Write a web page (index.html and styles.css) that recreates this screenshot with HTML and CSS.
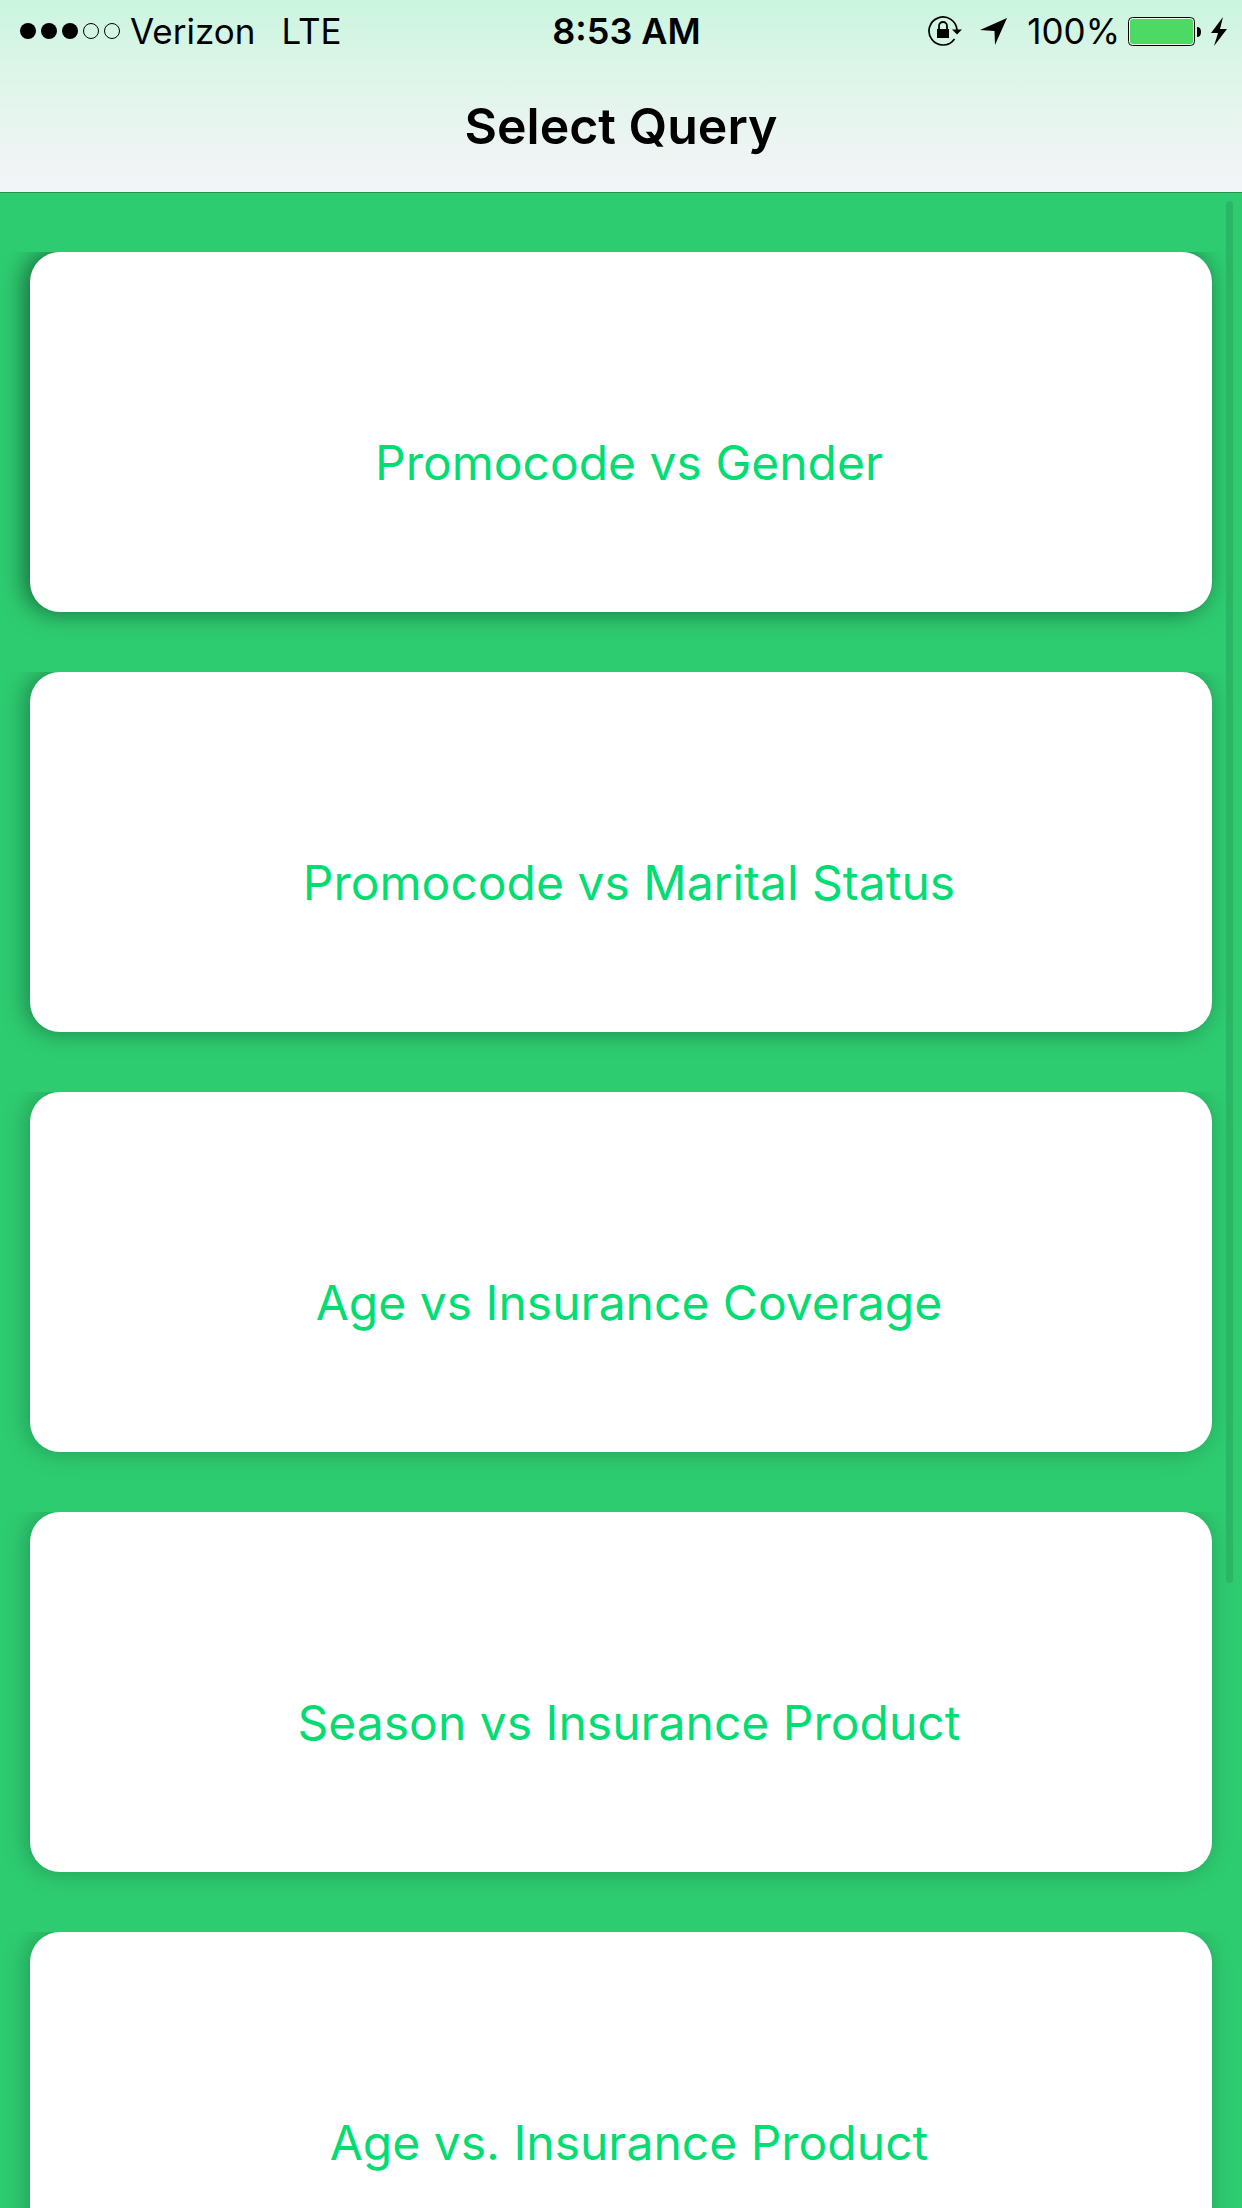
FILE: index.html
```html
<!DOCTYPE html>
<html lang="en">
<head>
<meta charset="utf-8">
<meta name="viewport" content="width=device-width, initial-scale=1">
<title>Select Query</title>
<link rel="stylesheet" href="styles.css">
</head>
<body>
<div class="screen">
  <header class="header">
    <div class="status">
      <div class="status-side">
        <svg class="signal" width="100" height="16" viewBox="0 0 100 16" aria-label="Signal 3 of 5">
          <circle cx="8" cy="8" r="8"/><circle cx="29" cy="8" r="8"/><circle cx="50" cy="8" r="8"/>
          <g fill="none" stroke="#000"><circle cx="71" cy="8" r="7.5"/><circle cx="92" cy="8" r="7.5"/></g>
        </svg>
        <span class="carrier">Verizon</span>
        <span class="network">LTE</span>
      </div>
      <time class="clock">8:53 AM</time>
      <div class="status-side status-right">
        <svg class="lock" width="34" height="32" viewBox="0 0 34 32" aria-label="Rotation lock">
          <path d="M26.500 24A14 14 0 1 1 29 15.500" fill="none" stroke="#000" stroke-width="1.700"/>
          <path d="M24 14.500h10l-5 5z"/>
          <path d="M9 14h12v9H9z"/>
          <path d="M11 14v-3a4 4 0 0 1 8 0v3" fill="none" stroke="#000" stroke-width="1.800"/>
        </svg>
        <svg class="location" width="27" height="27" viewBox="0 0 27 27" aria-label="Location">
          <path d="M27 0 15 27 14.500 13 0 12z"/>
        </svg>
        <span class="percent">100%</span>
        <svg class="battery" width="73" height="29" viewBox="0 0 73 29" aria-label="Battery full">
          <rect x=".5" y=".5" width="66" height="28" rx="4" fill="#fff" fill-opacity=".5" stroke="#000"/>
          <rect x="2" y="2" width="63" height="25" rx="3" fill="#4cd964"/>
          <path d="M69 10q4 0 4 5t-4 5z"/>
        </svg>
        <svg class="bolt" width="16" height="29" viewBox="0 0 16 29" aria-label="Charging">
          <path d="M12 0 0 16h7L3 29l13-17H9z"/>
        </svg>
      </div>
    </div>
    <h1 class="title">Select Query</h1>
  </header>
  <main class="list">
    <button class="card card-deep" type="button">Promocode vs Gender</button>
    <button class="card card-mid" type="button">Promocode vs Marital Status</button>
    <button class="card" type="button">Age vs Insurance Coverage</button>
    <button class="card" type="button">Season vs Insurance Product</button>
    <button class="card" type="button">Age vs. Insurance Product</button>
    <div class="scrollbar"></div>
  </main>
</div>
</body>
</html>
```
FILE: styles.css
```css
* { box-sizing: border-box; }
body { margin: 0; background: #2ecc71; font-family: Inter, "Liberation Sans", sans-serif; color: #000; }
.screen { height: 100vh; display: flex; flex-direction: column; overflow: hidden; }
.header { flex: none; background: linear-gradient(#cbf5df, #dff5e9 40%, #f1f4f5 88%, #f1f5f7); border-bottom: 1px solid #24914f; }
.status { display: grid; grid-template-columns: 1fr auto 1fr; align-items: center; height: 62px; padding: 0 15px 0 20px; font-size: 35px; line-height: 44px; }
.status-side { display: flex; align-items: center; }
.status-right { justify-content: flex-end; }
.carrier { margin-left: 10px; }
.network { margin-left: 26px; }
.clock { padding-left: 6px; font-size: 36px; font-weight: 600; }
.location { margin-left: 18px; }
.percent { margin-left: 20px; }
.battery { margin-left: 8px; }
.bolt { margin-left: 10px; }
.title { margin: 0; padding: 33px 0 35px; font-size: 50px; line-height: 62px; font-weight: 600; text-align: center; }
.list { position: relative; flex: 1; min-height: 0; display: flex; flex-direction: column; gap: 60px; padding: 59px 30px 0; overflow: hidden; }
.card { flex: none; height: 360px; padding: 62px 0 0 16px; border: 0; border-radius: 30px; background: #fff; color: #00dd72; font-family: inherit; font-size: 48px; line-height: 62px; text-align: center; box-shadow: -3px 0 24px rgba(0, 0, 0, .25); clip-path: inset(0 -30px -30px -30px); }
.card-deep { box-shadow: -5px 0 24px rgba(0, 0, 0, .5); }
.card-mid { box-shadow: -4px 0 24px rgba(0, 0, 0, .36); }
.scrollbar { position: absolute; top: 8px; right: 9px; width: 7px; height: 1382px; border-radius: 4px; background: #2ab765; }
```
